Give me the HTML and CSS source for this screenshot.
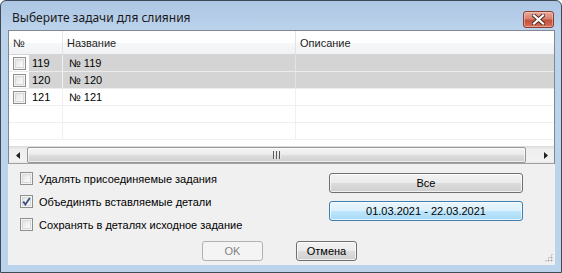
FILE: index.html
```html
<!DOCTYPE html>
<html lang="ru">
<head>
    <meta charset="UTF-8">
    <title>Выберите задачи для слияния</title>
    <link rel="stylesheet" href="styles.css">
</head>
<body>
    <div class="window">
        <div class="titlebar">
            <span class="title">Выберите задачи для слияния</span>
            <button class="close-btn" aria-label="Закрыть">
                <svg width="13" height="11" viewBox="0 0 13 11">
                    <path d="M2 1.5 L11 9.5 M11 1.5 L2 9.5" stroke="#4d2a24" stroke-width="4" stroke-linecap="square"/>
                    <path d="M2 1.5 L11 9.5 M11 1.5 L2 9.5" stroke="#ffffff" stroke-width="2.2" stroke-linecap="square"/>
                </svg>
            </button>
        </div>

        <div class="client">
            <div class="list">
                <div class="list-head">
                    <div class="col col-num">№</div>
                    <div class="col col-name">Название</div>
                    <div class="col col-desc">Описание</div>
                </div>
                <div class="list-body">
                    <div class="row selected">
                        <div class="col col-num"><span class="check"></span><span class="cell">119</span></div>
                        <div class="col col-name">№ 119</div>
                        <div class="col col-desc"></div>
                    </div>
                    <div class="row selected">
                        <div class="col col-num"><span class="check"></span><span class="cell">120</span></div>
                        <div class="col col-name">№ 120</div>
                        <div class="col col-desc"></div>
                    </div>
                    <div class="row">
                        <div class="col col-num"><span class="check"></span><span class="cell">121</span></div>
                        <div class="col col-name">№ 121</div>
                        <div class="col col-desc"></div>
                    </div>
                    <div class="row">
                        <div class="col col-num"></div>
                        <div class="col col-name"></div>
                        <div class="col col-desc"></div>
                    </div>
                    <div class="row">
                        <div class="col col-num"></div>
                        <div class="col col-name"></div>
                        <div class="col col-desc"></div>
                    </div>
                </div>
                <div class="hscroll">
                    <div class="arrow">
                        <svg width="4" height="7" viewBox="0 0 4 7"><path d="M4 0 L0 3.5 L4 7 Z" fill="#222"/></svg>
                    </div>
                    <div class="track">
                        <div class="thumb">
                            <svg width="8" height="8" viewBox="0 0 8 8">
                                <path d="M0.5 0 V8 M3.5 0 V8 M6.5 0 V8" stroke="#5a5a5a" stroke-width="1"/>
                                <path d="M1.5 0 V8 M4.5 0 V8 M7.5 0 V8" stroke="#e8e8e8" stroke-width="1"/>
                            </svg>
                        </div>
                    </div>
                    <div class="arrow">
                        <svg width="4" height="7" viewBox="0 0 4 7"><path d="M0 0 L4 3.5 L0 7 Z" fill="#222"/></svg>
                    </div>
                </div>
            </div>

            <div class="bottom">
                <div class="options">
                    <label class="option"><span class="check"></span>Удалять присоединяемые задания</label>
                    <label class="option"><span class="check checked">
                        <svg width="9" height="9" viewBox="0 0 9 9"><path d="M1.2 4.6 L3.4 7.4 L7.8 1" fill="none" stroke="#3a4f8e" stroke-width="1.8"/></svg>
                    </span>Объединять вставляемые детали</label>
                    <label class="option"><span class="check"></span>Сохранять в деталях исходное задание</label>
                </div>
                <div class="side">
                    <button class="btn">Все</button>
                    <button class="btn btn-focus">01.03.2021 - 22.03.2021</button>
                </div>
            </div>

            <div class="footer">
                <button class="btn btn-small" disabled>OK</button>
                <button class="btn btn-small">Отмена</button>
            </div>

            <div class="grip"></div>
        </div>
    </div>
</body>
</html>
```

FILE: styles.css
```css
* {
    margin: 0;
    padding: 0;
    box-sizing: border-box;
}

body {
    width: 562px;
    height: 273px;
    overflow: hidden;
    background: #ffffff;
    font-family: "Liberation Sans", Arial, sans-serif;
    font-size: 11px;
    color: #000000;
}

.window {
    width: 562px;
    height: 273px;
    border: 1px solid #404a56;
    border-radius: 6px 6px 0 0;
    background: linear-gradient(to bottom, #adc6e3 0%, #bcd3ec 30px, #bcd3ec 100%);
    padding: 0 6px 7px 7px;
    display: flex;
    flex-direction: column;
}

.titlebar {
    height: 29px;
    display: flex;
    align-items: center;
    justify-content: space-between;
    padding-left: 4px;
}

.title {
    font-family: "Noto Sans", sans-serif;
    font-size: 12px;
    color: #1a1a1a;
    margin-top: 4px;
}

.close-btn {
    width: 31px;
    height: 17px;
    margin-top: 8px;
    margin-right: 1px;
    border: 1px solid #8a3f33;
    border-radius: 3px;
    background: linear-gradient(to bottom, #e9a99b 0%, #d9816f 45%, #c4503b 55%, #d46e57 100%);
    box-shadow: inset 0 0 0 1px rgba(255, 220, 210, 0.45);
    display: flex;
    align-items: center;
    justify-content: center;
}

.client {
    position: relative;
    flex: 1;
    background: #f0f0f0;
    display: flex;
    flex-direction: column;
}

/* list view */

.list {
    height: 134px;
    border: 1px solid #828790;
    border-bottom-color: #a0a0a0;
    background: #ffffff;
    display: flex;
    flex-direction: column;
}

.list-head {
    height: 24px;
    display: flex;
    background: linear-gradient(to bottom, #ffffff 0%, #ffffff 50%, #f6f7f8 51%, #f1f2f4 100%);
    border-bottom: 1px solid #d5d5d5;
}

.list-head .col {
    display: flex;
    align-items: center;
    padding-left: 4px;
    color: #1e1e1e;
    border-right: 1px solid #e3e4e6;
}

.col-num { width: 54px; }
.col-name { width: 233px; }
.col-desc { flex: 1; }

.list-head .col-desc { border-right: none; }

.list-body {
    height: 91px;
    overflow: hidden;
}

.row {
    height: 17px;
    display: flex;
    border-bottom: 1px solid #f0f0f0;
}

.row .col {
    display: flex;
    align-items: center;
    border-right: 1px solid #f0f0f0;
}

.row .col-desc { border-right: none; }

.row .col-num {
    padding-left: 4px;
    gap: 6px;
}

.row .col-name { padding-left: 6px; }

.row.selected .col-name,
.row.selected .col-desc,
.row.selected .cell {
    background: #d4d4d4;
}

.row.selected .col-name,
.row.selected .col-desc {
    border-right-color: #e4e4e4;
}

.row.selected { border-bottom-color: #ececec; }

.row.selected .cell {
    align-self: stretch;
    display: flex;
    align-items: center;
    flex: 1;
    padding-left: 3px;
    margin-left: -3px;
}

.row .cell { padding-left: 3px; margin-left: -3px; }

/* horizontal scrollbar */

.hscroll {
    height: 17px;
    display: flex;
    background: linear-gradient(to bottom, #e2e2e2 0%, #eeeeee 15%, #f2f2f2 85%, #e8e8e8 100%);
    border-top: 1px solid #dedede;
    margin-top: auto;
}

.arrow {
    width: 17px;
    display: flex;
    align-items: center;
    justify-content: center;
}

.track {
    flex: 1;
    padding: 0 11px 0 1px;
    display: flex;
}

.thumb {
    flex: 1;
    border: 1px solid #979797;
    border-radius: 2px;
    background: linear-gradient(to bottom, #f5f5f5 0%, #ececec 45%, #dcdcdc 55%, #d0d0d0 100%);
    box-shadow: inset 0 0 0 1px rgba(255, 255, 255, 0.6);
    display: flex;
    align-items: center;
    justify-content: center;
}

/* checkboxes */

.check {
    width: 13px;
    height: 13px;
    flex: none;
    border: 1px solid #8e8f8f;
    background: linear-gradient(135deg, #dcdcdc 0%, #f4f4f4 60%, #ffffff 100%);
    box-shadow: inset 0 0 0 1px #f4f4f4, inset 0 0 0 2px #d8d8d8;
    display: flex;
    align-items: center;
    justify-content: center;
}

/* options and buttons */

.bottom {
    display: flex;
    padding: 3px 32px 0 12px;
}

.options {
    flex: 1;
    display: flex;
    flex-direction: column;
}

.option {
    height: 23px;
    display: flex;
    align-items: center;
    gap: 6px;
    color: #000000;
}

.side {
    width: 194px;
    padding-top: 6px;
    display: flex;
    flex-direction: column;
    gap: 8px;
}

.btn {
    height: 20px;
    font-family: "Liberation Sans", Arial, sans-serif;
    font-size: 11px;
    color: #000000;
    border: 1px solid #707070;
    border-radius: 3px;
    background: linear-gradient(to bottom, #f2f2f2 0%, #ebebeb 50%, #dddddd 51%, #cfcfcf 100%);
    box-shadow: inset 0 0 0 1px rgba(255, 255, 255, 0.7);
}

.btn-focus {
    border-color: #3c7fb1;
    background: linear-gradient(to bottom, #eaf6fd 0%, #d9f0fc 50%, #bee6fd 51%, #a7d9f5 100%);
}

.btn:disabled {
    border-color: #adb2b5;
    background: #f4f4f4;
    color: #838383;
    box-shadow: none;
}

.footer {
    display: flex;
    gap: 33px;
    padding-left: 194px;
    margin-top: 5px;
}

.btn-small { width: 61px; }

.grip {
    position: absolute;
    right: 2px;
    bottom: 3px;
    width: 9px;
    height: 9px;
    background:
        radial-gradient(circle, #a8a8a8 0.8px, transparent 1.2px) 0 0 / 3px 3px;
    clip-path: polygon(100% 0, 100% 100%, 0 100%);
}
```
